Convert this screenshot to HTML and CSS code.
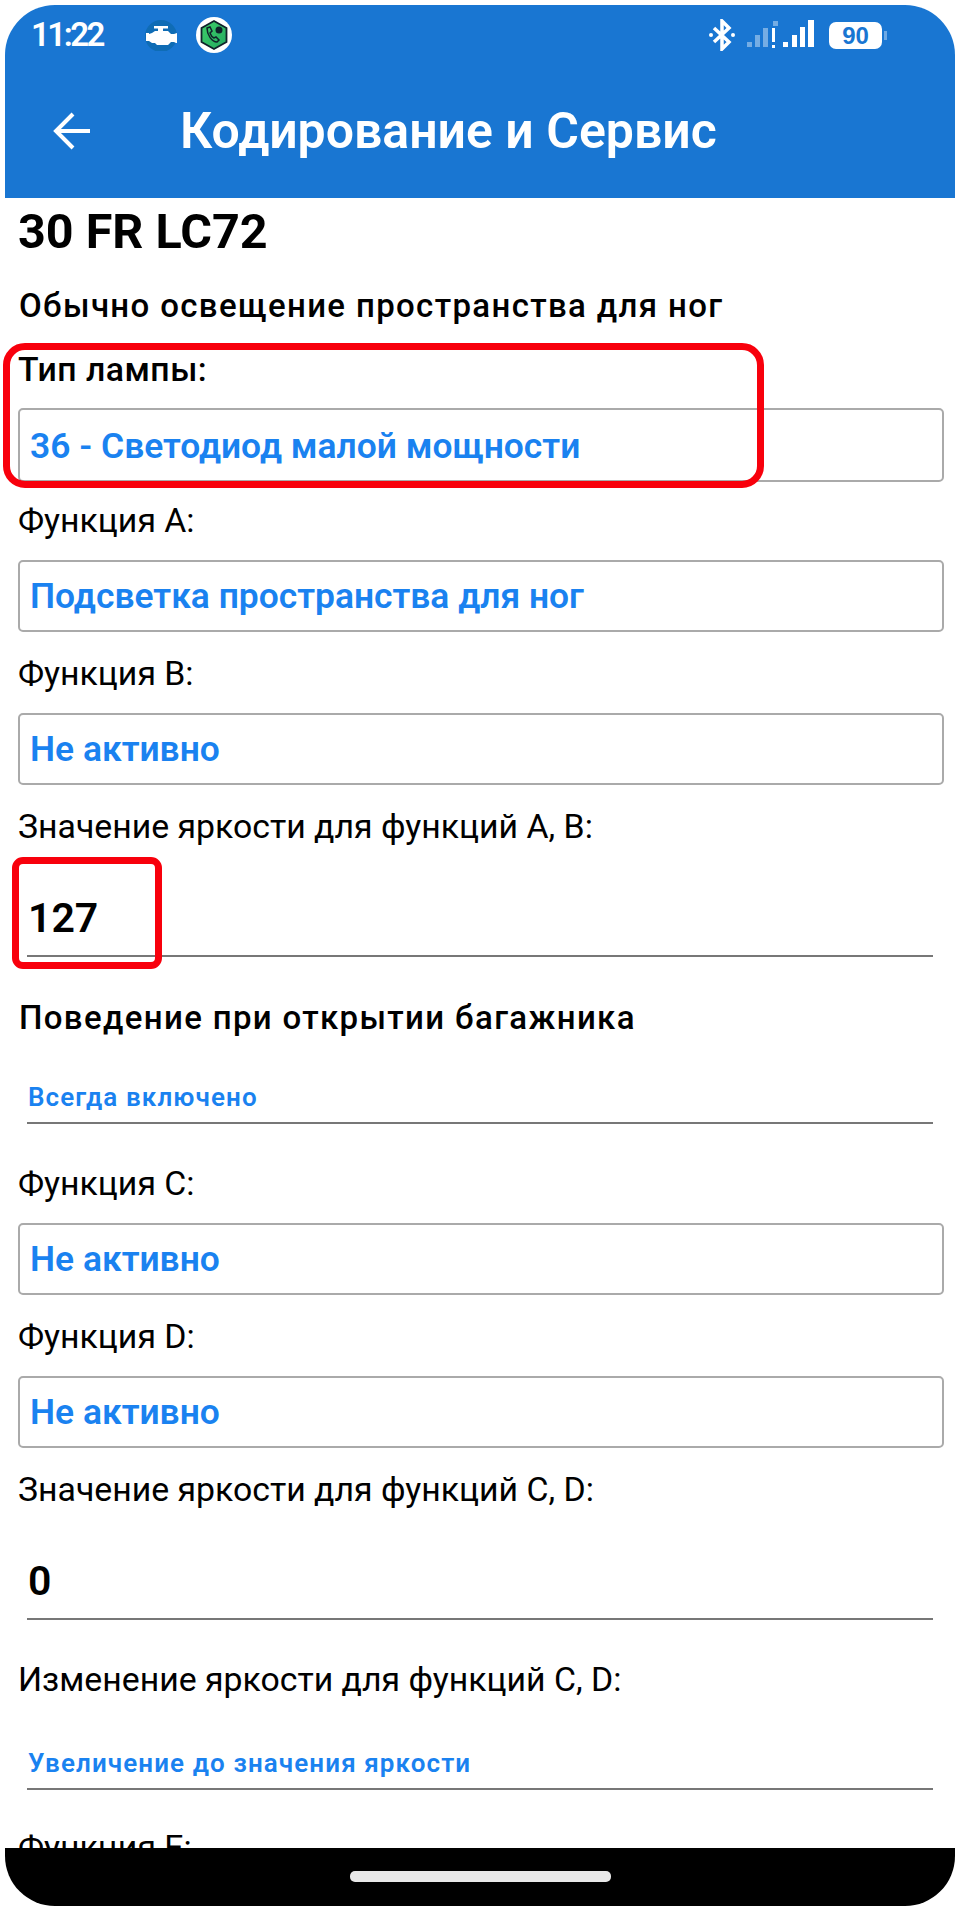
FILE: index.html
```html
<!DOCTYPE html>
<html lang="ru">
<head>
<meta charset="utf-8">
<title>Кодирование и Сервис</title>
<link rel="stylesheet" href="styles.css">
</head>
<body>
<div class="phone">
  <header class="appbar">
    <div class="status">
      <span class="time">11:22</span>
      <svg class="ic-engine" viewBox="0 0 32 32" width="32" height="32"><circle cx="16" cy="17" r="16" fill="#0f6cb5"/><path d="M1 14h3v1l3-1 3-2h3V9.500H9V7h14v2.500h-5V12h5l3 3h3l3-1h1v10h-2l-2-1h-3l-3 3H12l-2-2H7l-3-2H1z" fill="#fff"/></svg>
      <svg class="ic-badge" viewBox="0 0 36 36" width="36" height="36"><defs><linearGradient id="hex" x1="0" y1="0" x2="1" y2="1"><stop offset="0" stop-color="#3fd06a"/><stop offset="1" stop-color="#22a860"/></linearGradient></defs><circle cx="18" cy="18" r="18" fill="#fff"/><path d="M18 4l12.500 7v14L18 32 5.500 25V11z" fill="url(#hex)" stroke="#10222a" stroke-width="1.800"/><path d="M11 11l3-1 2 4-2 2c1 3 2 4 4 5l2-1 3 3-2 2c-5 0-10-7-10-14z" fill="none" stroke="#10222a" stroke-width="1.500"/><circle cx="23" cy="13" r="3.500" fill="#10222a"/></svg>
      <span class="spacer"></span>
      <svg class="ic-bt" viewBox="0 0 26 32" width="26" height="32"><path d="M5 9l15 14-7 7V2l7 7L5 23" fill="none" stroke="#fff" stroke-width="3.500"/><circle cx="2" cy="16" r="2" fill="#fff"/><circle cx="24" cy="16" r="2" fill="#fff"/></svg>
      <svg class="ic-signal" viewBox="0 0 70 30" width="70" height="30"><g fill="#fff"><g opacity=".4"><rect x="1" y="22" width="5" height="5"/><rect x="9" y="15" width="5" height="12"/><rect x="17" y="8" width="5" height="19"/><rect x="27" y="1" width="5" height="5"/></g><rect x="26" y="8" width="3" height="14"/><rect x="26" y="25" width="3" height="3"/><rect x="37" y="22" width="5" height="5"/><rect x="46" y="15" width="5" height="12"/><rect x="54" y="7" width="5" height="20"/><rect x="62" y="0" width="6" height="27"/></g></svg>
      <span class="battery">90</span>
      <span class="nub"></span>
    </div>
    <div class="toolbar">
      <svg class="ic-back" viewBox="0 0 38 38" width="38" height="38"><path d="M20 2L3 19l17 17M3 19h34" fill="none" stroke="#fff" stroke-width="4"/></svg>
      <h1 class="title">Кодирование и Сервис</h1>
    </div>
  </header>

  <main class="content">
    <h2 class="heading">30 FR LC72</h2>
    <h3 class="subheading s1">Обычно освещение пространства для ног</h3>
    <div class="label label-strong l1">Тип лампы:</div>
    <div class="box box-first">36 - Светодиод малой мощности</div>
    <div class="label l-a">Функция A:</div>
    <div class="box">Подсветка пространства для ног</div>
    <div class="label">Функция B:</div>
    <div class="box">Не активно</div>
    <div class="label">Значение яркости для функций A, B:</div>
    <div class="num">127</div>
    <h3 class="subheading s2">Поведение при открытии багажника</h3>
    <div class="pick">Всегда включено</div>
    <div class="label l2">Функция C:</div>
    <div class="box">Не активно</div>
    <div class="label">Функция D:</div>
    <div class="box">Не активно</div>
    <div class="label">Значение яркости для функций C, D:</div>
    <div class="num">0</div>
    <div class="label l3">Изменение яркости для функций C, D:</div>
    <div class="pick p2">Увеличение до значения яркости</div>
    <div class="label l4">Функция E:</div>
  </main>

  <footer class="navbar"><span class="pill"></span></footer>
  <div class="mark mark-a"></div>
  <div class="mark mark-b"></div>
</div>
</body>
</html>
```
FILE: styles.css
```css
* { box-sizing: border-box; }
html, body { margin: 0; padding: 0; background: #fff; }
body { width: 960px; height: 1911px; padding: 5px; overflow: hidden; font-family: Roboto, "Noto Sans", sans-serif; color: #000; }
.phone { position: relative; width: 950px; height: 1901px; display: flex; flex-direction: column; }

.appbar { height: 193px; background: #1976d2; border-radius: 50px 50px 0 0; color: #fff; flex: none; }
.status { display: flex; align-items: center; height: 60px; padding: 0 0 0 26px; }
.time { font: 600 33px/1 Roboto, sans-serif; letter-spacing: -2.500px; width: 114px; margin-top: -1px; }
.ic-badge { margin-left: 19px; }
.spacer { flex: 1; }
.ic-bt { margin-right: 11px; }
.ic-signal { margin-right: 13px; }
.battery { width: 53px; height: 27px; background: #fff; border-radius: 7px; color: #1976d2; font: 700 24px/27px "Liberation Sans", sans-serif; text-align: center; }
.nub { width: 3px; height: 9px; margin: 0 68px 0 2px; background: #6ea9e4; }
.toolbar { display: flex; align-items: center; height: 72px; margin-top: 30px; padding-left: 48px; }
.title { margin: 0 0 0 89px; font: 600 50px/1 Roboto, sans-serif; color: #fff; }

.content { flex: 1; min-height: 0; overflow: hidden; padding: 0 11px 0 13px; }
.heading { margin: 7px 0 0; font: 700 48.500px/54px Roboto, sans-serif; }
.subheading { margin: 27px 0 0 1px; font: 500 33px/36px Roboto, sans-serif; letter-spacing: 1.350px; }
.s1 { margin-top: 29px; }
.label { margin-top: 24px; font: 400 33.800px/36px Roboto, sans-serif; }
.label-strong { font-weight: 500; letter-spacing: .5px; }
.l1 { margin-top: 28px; }
.l-a { margin-top: 21px; }
.box { height: 72px; margin-top: 21px; border: 2px solid #aaa; border-radius: 5px; padding-left: 10px; font: 600 35.400px/68px Roboto, sans-serif; color: #1a82f0; }
.box-first { height: 74px; margin-top: 20px; line-height: 72px; }
.num { height: 91px; margin: 21px 11px 0 9px; padding: 17px 0 0 1px; border-bottom: 2px solid #777; font: 600 41px/70px Roboto, sans-serif; }
.pick { height: 47px; margin: 41px 11px 0 9px; padding-left: 1px; border-bottom: 2px solid #777; font: 600 26px/40px Roboto, sans-serif; letter-spacing: 1.100px; color: #1a82f0; }
.s2 { margin-top: 43px; }
.l2 { margin-top: 42px; }
.l3 { margin-top: 42px; }
.p2 { margin-top: 45px; }
.l4 { margin-top: 40px; }

.navbar { flex: none; height: 58px; background: #000; border-radius: 0 0 50px 50px; display: flex; justify-content: center; padding-top: 23px; }
.pill { width: 261px; height: 11px; background: #e8e8e8; border-radius: 5px; }

.mark { position: absolute; border: 7px solid #f8000c; }
.mark-a { left: -2px; top: 338px; width: 761px; height: 145px; border-radius: 22px; }
.mark-b { left: 7px; top: 852px; width: 150px; height: 112px; border-radius: 11px; }
```
